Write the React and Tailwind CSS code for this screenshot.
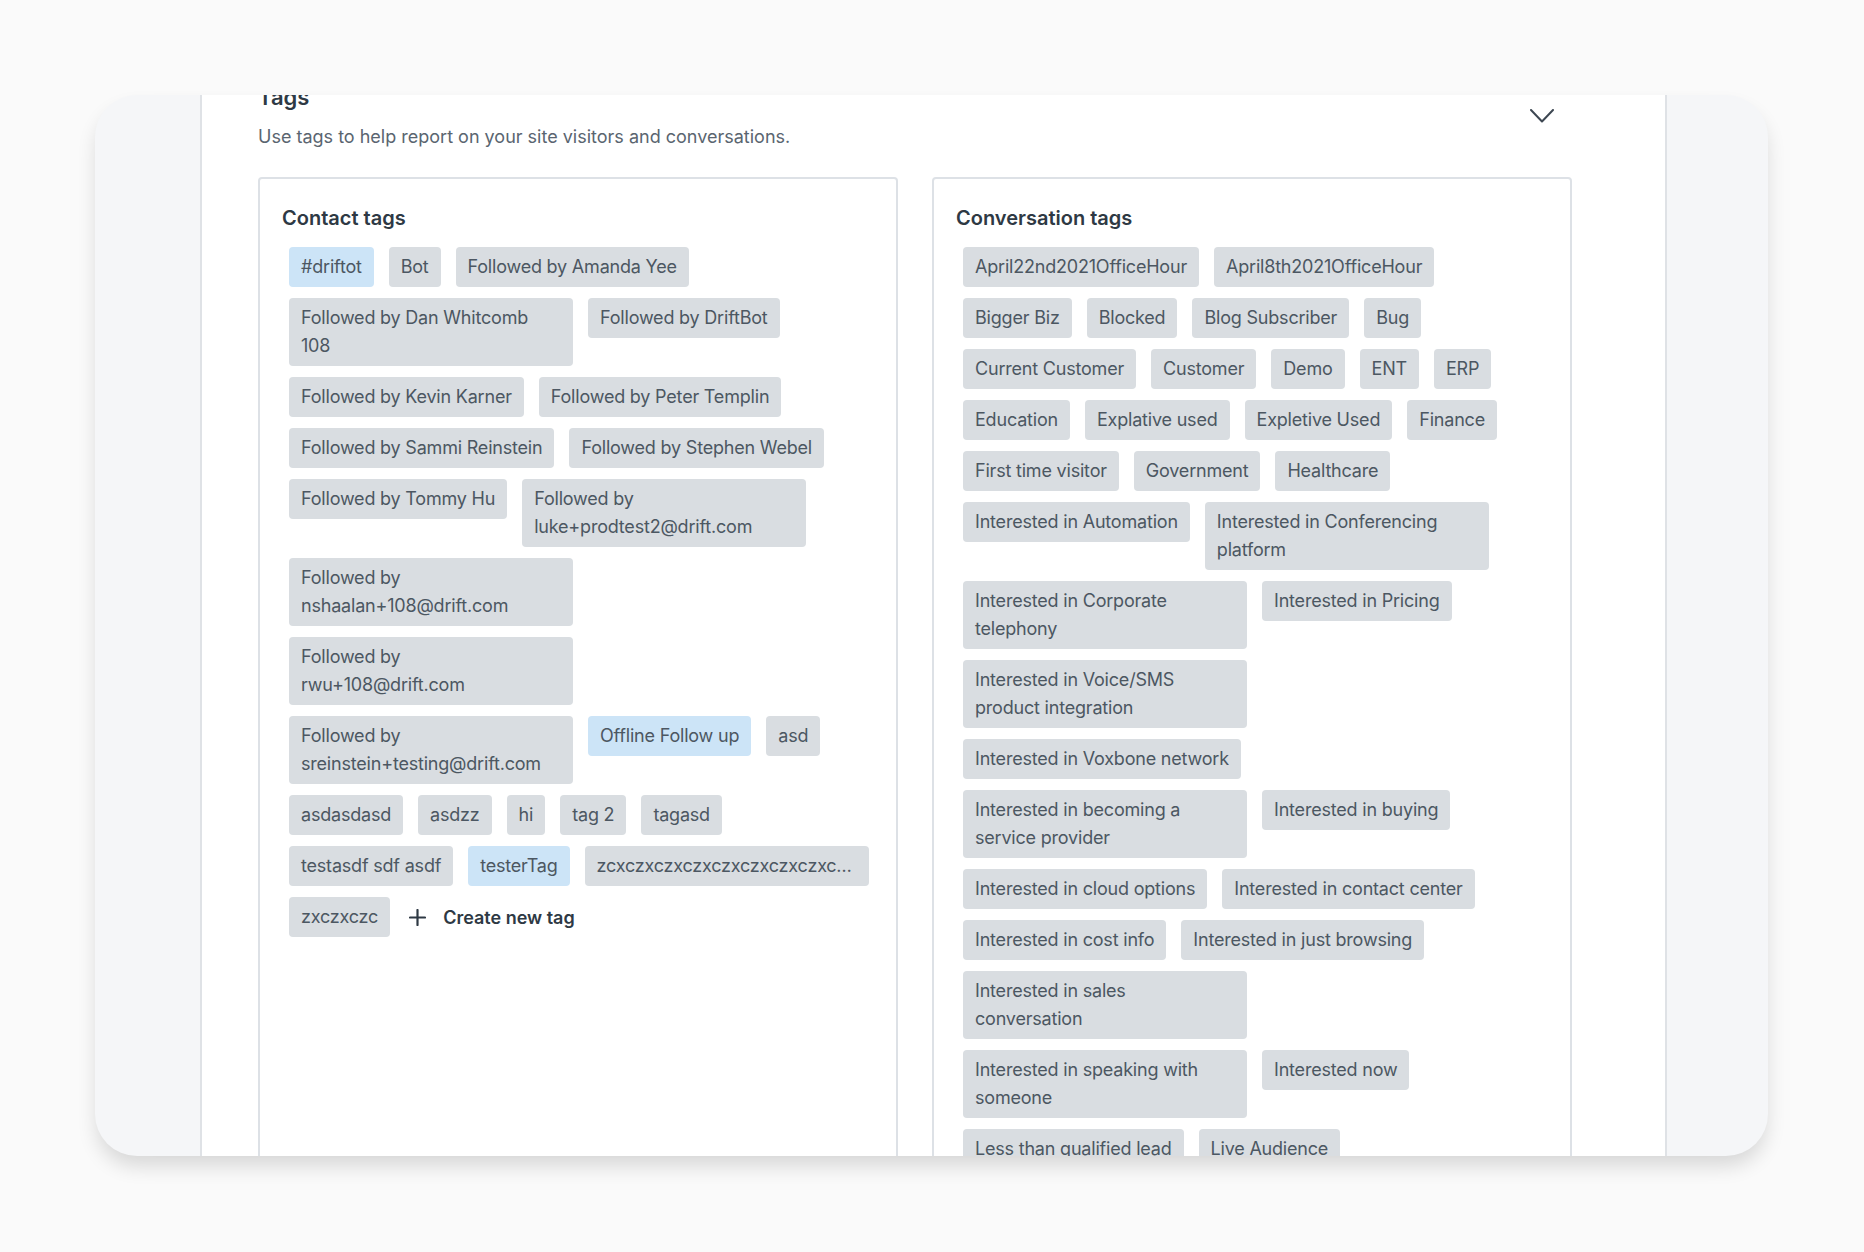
const contactTags = [
  { label: "#driftot", blue: true },
  { label: "Bot" },
  { label: "Followed by Amanda Yee" },
  { label: "Followed by Dan Whitcomb 108" },
  { label: "Followed by DriftBot" },
  { label: "Followed by Kevin Karner" },
  { label: "Followed by Peter Templin" },
  { label: "Followed by Sammi Reinstein" },
  { label: "Followed by Stephen Webel" },
  { label: "Followed by Tommy Hu" },
  { label: "Followed by luke+prodtest2@drift.com" },
  { label: "Followed by nshaalan+108@drift.com" },
  { label: "Followed by rwu+108@drift.com" },
  { label: "Followed by sreinstein+testing@drift.com" },
  { label: "Offline Follow up", blue: true },
  { label: "asd" },
  { label: "asdasdasd" },
  { label: "asdzz" },
  { label: "hi" },
  { label: "tag 2" },
  { label: "tagasd" },
  { label: "testasdf sdf asdf" },
  { label: "testerTag", blue: true },
  { label: "zcxczxczxczxczxczxczxczxczxczxczxczxczxczxcz" },
  { label: "zxczxczc" },
];

const conversationTags = [
  "April22nd2021OfficeHour",
  "April8th2021OfficeHour",
  "Bigger Biz",
  "Blocked",
  "Blog Subscriber",
  "Bug",
  "Current Customer",
  "Customer",
  "Demo",
  "ENT",
  "ERP",
  "Education",
  "Explative used",
  "Expletive Used",
  "Finance",
  "First time visitor",
  "Government",
  "Healthcare",
  "Interested in Automation",
  "Interested in Conferencing platform",
  "Interested in Corporate telephony",
  "Interested in Pricing",
  "Interested in Voice/SMS product integration",
  "Interested in Voxbone network",
  "Interested in becoming a service provider",
  "Interested in buying",
  "Interested in cloud options",
  "Interested in contact center",
  "Interested in cost info",
  "Interested in just browsing",
  "Interested in sales conversation",
  "Interested in speaking with someone",
  "Interested now",
  "Less than qualified lead",
  "Live Audience",
];

function Tag({ label, blue }) {
  return (
    <span
      className={
        blue
          ? "max-w-[284px] overflow-hidden text-ellipsis rounded-[4px] bg-[#cce4f7] px-[12px] py-[6px] text-[18px] leading-[28px] tracking-[-0.2px] text-[#4c5762]"
          : "max-w-[284px] overflow-hidden text-ellipsis rounded-[4px] bg-[#d9dde1] px-[12px] py-[6px] text-[18px] leading-[28px] tracking-[-0.2px] text-[#4c5762]"
      }
    >
      {label}
    </span>
  );
}

// wrapClass: the two lists wrap at slightly different points in the original
function TagCard({ title, wrapClass, children }) {
  return (
    <div className="h-[1000px] w-[640px] rounded-[4px] border-2 border-[#dde1e6] bg-white px-[22px] pt-[25px]">
      <h3 className="text-[20px] font-semibold leading-[28px] text-[#2e3944]">{title}</h3>
      <div className={"mt-[15px] flex flex-wrap items-start gap-x-[15px] gap-y-[11px] pl-[7px] " + wrapClass}>
        {children}
      </div>
    </div>
  );
}

export default function App() {
  return (
    <div
      className="min-h-[1252px] bg-[#fafafa] pl-[95px] pt-[95px]"
      style={{ fontFamily: "Inter, 'Noto Sans', sans-serif" }}
    >
      <div className="flex h-[1061px] w-[1673px] overflow-hidden rounded-[42px] bg-[#f5f6f8] pl-[105px] shadow-[0_12px_20px_-2px_rgba(0,0,0,0.14)]">
        <div className="h-full w-[1467px] border-x-2 border-[#dfe2e6] bg-white pl-[56px]">
          <div className="-mt-[12px] w-[1314px]">
            <div className="flex items-start justify-between">
              <div>
                <h2 className="text-[22px] font-semibold leading-[28px] text-[#2e3944]">Tags</h2>
                <p className="mt-[13px] text-[18px] leading-[26px] text-[#5a6570]">
                  Use tags to help report on your site visitors and conversations.
                </p>
              </div>
              <svg
                className="mr-[18px] mt-[26px]"
                width="24"
                height="14"
                viewBox="0 0 24 14"
                fill="none"
                stroke="#3d4752"
                strokeWidth="2"
                strokeLinecap="round"
                strokeLinejoin="round"
              >
                <polyline points="1,1 12,12.5 23,1" />
              </svg>
            </div>

            <div className="mt-[27px] flex gap-[34px]">
              <TagCard title="Contact tags" wrapClass="pr-[3px]">
                {contactTags.map((t) => (
                  <Tag key={t.label} label={t.label} blue={t.blue} />
                ))}
                <button className="flex h-[40px] items-center gap-[17px] pl-[4px] text-[18px] font-semibold text-[#2e3944]">
                  <svg width="17" height="17" viewBox="0 0 17 17" stroke="#2e3944" strokeWidth="2.2" strokeLinecap="round">
                    <line x1="8.5" y1="1" x2="8.5" y2="16" />
                    <line x1="1" y1="8.5" x2="16" y2="8.5" />
                  </svg>
                  Create new tag
                </button>
              </TagCard>
              <TagCard title="Conversation tags" wrapClass="pr-[12px]">
                {conversationTags.map((t) => (
                  <Tag key={t} label={t} />
                ))}
              </TagCard>
            </div>
          </div>
        </div>
      </div>
    </div>
  );
}
